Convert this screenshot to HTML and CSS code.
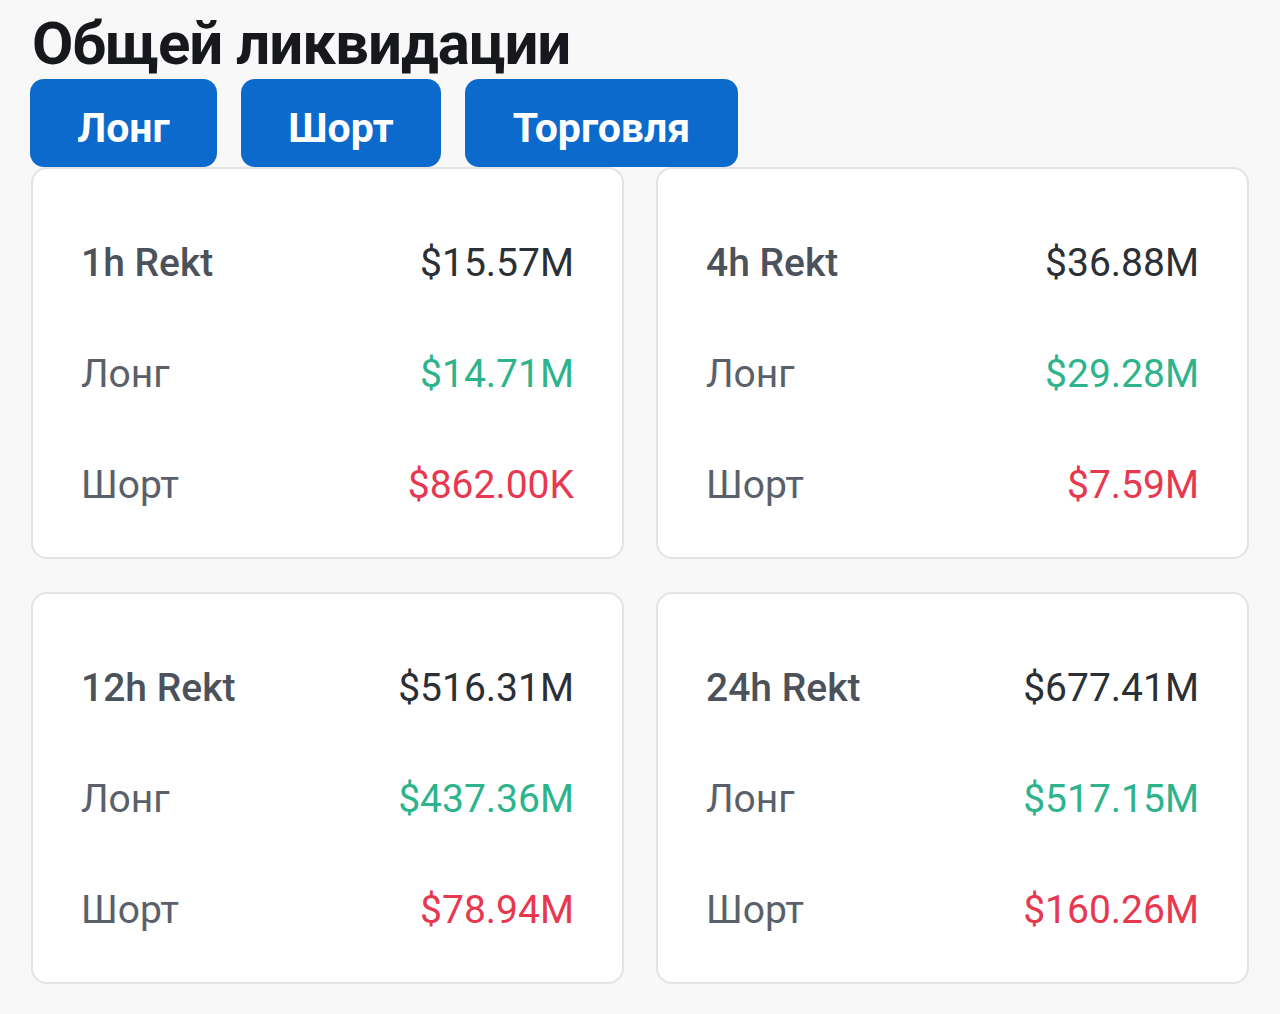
FILE: index.html
```html
<!DOCTYPE html>
<html lang="ru">
<head>
  <meta charset="UTF-8">
  <title>Общей ликвидации</title>
  <link rel="stylesheet" href="styles.css">
</head>
<body>
  <div class="page">
    <h1 class="title">Общей ликвидации</h1>

    <!-- tabs -->
    <div class="tabs">
      <button class="tab tab-long">Лонг</button>
      <button class="tab tab-short">Шорт</button>
      <button class="tab tab-trade">Торговля</button>
    </div>

    <!-- rekt cards -->
    <div class="grid">
      <div class="card">
        <div class="row"><span class="head">1h Rekt</span><span class="val">$15.57M</span></div>
        <div class="row"><span class="label">Лонг</span><span class="val up">$14.71M</span></div>
        <div class="row"><span class="label">Шорт</span><span class="val down">$862.00K</span></div>
      </div>
      <div class="card">
        <div class="row"><span class="head">4h Rekt</span><span class="val">$36.88M</span></div>
        <div class="row"><span class="label">Лонг</span><span class="val up">$29.28M</span></div>
        <div class="row"><span class="label">Шорт</span><span class="val down">$7.59M</span></div>
      </div>
      <div class="card">
        <div class="row"><span class="head">12h Rekt</span><span class="val">$516.31M</span></div>
        <div class="row"><span class="label">Лонг</span><span class="val up">$437.36M</span></div>
        <div class="row"><span class="label">Шорт</span><span class="val down">$78.94M</span></div>
      </div>
      <div class="card">
        <div class="row"><span class="head">24h Rekt</span><span class="val">$677.41M</span></div>
        <div class="row"><span class="label">Лонг</span><span class="val up">$517.15M</span></div>
        <div class="row"><span class="label">Шорт</span><span class="val down">$160.26M</span></div>
      </div>
    </div>
  </div>
</body>
</html>
```

FILE: styles.css
```css
html, body { margin: 0; padding: 0; background: #f8f8f8; }
body { font-family: Roboto, "Liberation Sans", sans-serif; }
.page { padding: 0 31px; }

.title { margin: 0; padding: 14px 0 0 1px; height: 79px; box-sizing: border-box; font-size: 60px; line-height: 60px; font-weight: 700; color: #16181c; letter-spacing: -1px; white-space: nowrap; }

.tabs { display: flex; gap: 24px; margin-left: -1px; }
.tab { height: 88px; border: none; border-radius: 14px; background: #0b6acb; color: #fff; font-family: Roboto, "Liberation Sans", sans-serif; font-size: 41px; font-weight: 700; padding: 10px 0 0 0; }
.tab-long { width: 187px; }
.tab-short { width: 200px; }
.tab-trade { width: 273px; }

.grid { display: grid; grid-template-columns: 1fr 1fr; column-gap: 32px; row-gap: 33px; margin-top: 0; position: relative; }
.card { background: #fff; border: 2px solid #e3e3e3; border-radius: 16px; padding: 38px 48px 15px 48px; height: 392px; box-sizing: border-box; }
.row { display: flex; justify-content: space-between; align-items: center; height: 111px; font-size: 39px; }
.head { font-weight: 500; color: #4c525b; }
.label { color: #5a606a; }
.val { color: #2b2f36; }
.up { color: #2db48c; }
.down { color: #e8384f; }
```
